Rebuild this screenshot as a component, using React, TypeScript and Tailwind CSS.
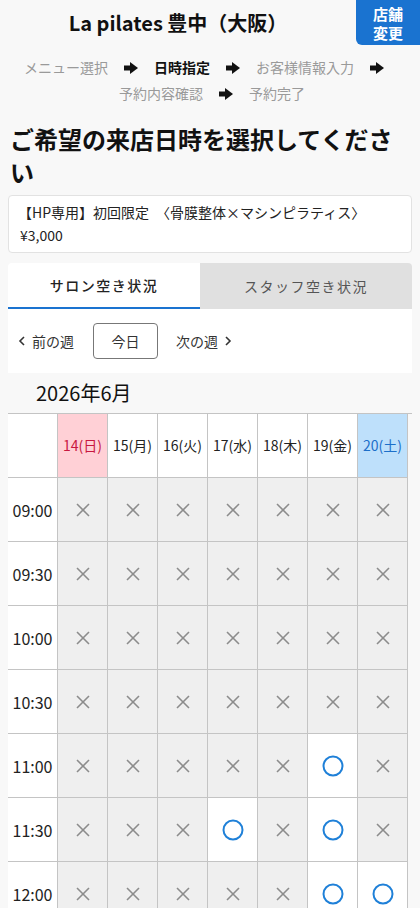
import React from "react";

const FONT = '"Noto Sans CJK JP", "Noto Sans", sans-serif';

function Arrow() {
  return (
    <svg width="14" height="12" viewBox="0 0 14 12" className="inline-block mx-[16px] align-[-1px]">
      <rect x="0" y="3.5" width="7" height="5" fill="#111" />
      <polygon points="6,0 14,6 6,12" fill="#111" />
    </svg>
  );
}

function Cross() {
  return (
    <svg width="14" height="14" viewBox="0 0 14 14">
      <line x1="1" y1="1" x2="13" y2="13" stroke="#8c8c8c" strokeWidth="1.6" />
      <line x1="13" y1="1" x2="1" y2="13" stroke="#8c8c8c" strokeWidth="1.6" />
    </svg>
  );
}

function Circle() {
  return (
    <svg width="22" height="22" viewBox="0 0 22 22">
      <circle cx="11" cy="11" r="9.5" fill="none" stroke="#1f80d8" strokeWidth="2" />
    </svg>
  );
}

const days = [
  { label: "14(日)", kind: "sun" },
  { label: "15(月)", kind: "" },
  { label: "16(火)", kind: "" },
  { label: "17(水)", kind: "" },
  { label: "18(木)", kind: "" },
  { label: "19(金)", kind: "" },
  { label: "20(土)", kind: "sat" },
];

const rows: { time: string; open: number[] }[] = [
  { time: "09:00", open: [] },
  { time: "09:30", open: [] },
  { time: "10:00", open: [] },
  { time: "10:30", open: [] },
  { time: "11:00", open: [5] },
  { time: "11:30", open: [3, 5] },
  { time: "12:00", open: [5, 6] },
  { time: "12:30", open: [5, 6] },
];

export default function App() {
  return (
    <div className="min-h-screen bg-[#f8f8f8] text-[#222]" style={{ fontFamily: FONT }}>
      {/* header */}
      <div className="flex h-[45px] items-center">
        <div className="flex-1 text-center text-[20px] font-bold text-[#111]">La pilates 豊中（大阪）</div>
        <div className="w-[64px] h-[45px] bg-[#1a73d0] text-white rounded-bl-[6px] flex flex-col items-center justify-center text-[15px] font-bold leading-[19px]">
          <span>店舗</span>
          <span>変更</span>
        </div>
      </div>

      {/* breadcrumb */}
      <div className="mt-[9px] text-[14px] leading-[26px] text-[#9a9a9a] text-center">
        <div className="pl-[4px]">
          <span>メニュー選択</span>
          <Arrow />
          <span className="font-bold text-[#111]">日時指定</span>
          <Arrow />
          <span>お客様情報入力</span>
          <Arrow />
        </div>
        <div className="pl-[4px]">
          <span>予約内容確認</span>
          <Arrow />
          <span>予約完了</span>
        </div>
      </div>

      {/* heading */}
      <h1 className="mt-[16px] px-[10px] text-[24px] font-bold leading-[33px] text-[#111]">
        ご希望の来店日時を選択してください
      </h1>

      {/* menu card */}
      <div className="mx-2 mt-[7px] bg-white border border-[#e2e2e2] rounded-[4px] px-[9px] py-[5px] text-[14px] leading-[23px] text-[#222]">
        <div>【HP専用】初回限定　〈骨膜整体×マシンピラティス〉</div>
        <div className="pl-[2px]">¥3,000</div>
      </div>

      {/* tabs */}
      <div className="mx-2 mt-[10px] flex h-[46px] text-[14px] tracking-[1.5px]">
        <div className="w-[192px] bg-white rounded-tl-[4px] border-b-2 border-[#1a73d0] flex items-center justify-center font-medium text-[#222]">
          サロン空き状況
        </div>
        <div className="flex-1 bg-[#e0e0e0] rounded-tr-[4px] flex items-center justify-center text-[#555]">
          スタッフ空き状況
        </div>
      </div>

      {/* week nav */}
      <div className="mx-2 bg-white h-[64px] flex items-center text-[14px] text-[#333]">
        <div className="flex items-center pl-[10px] gap-[6px]">
          <svg width="8" height="10" viewBox="0 0 8 10">
            <polyline points="6,1 2,5 6,9" fill="none" stroke="#333" strokeWidth="1.6" />
          </svg>
          <span>前の週</span>
        </div>
        <div className="ml-[19px] w-[65px] h-[36px] border border-[#777] rounded-[4px] flex items-center justify-center">
          今日
        </div>
        <div className="ml-[18px] flex items-center gap-[6px]">
          <span>次の週</span>
          <svg width="8" height="10" viewBox="0 0 8 10">
            <polyline points="2,1 6,5 2,9" fill="none" stroke="#333" strokeWidth="1.6" />
          </svg>
        </div>
      </div>

      {/* month */}
      <div className="h-[40px] flex items-center pl-[36px] text-[20px] text-[#111]">2026年6月</div>

      {/* table */}
      <div className="mx-2 border-t border-[#c4c4c4] grid grid-cols-[50px_repeat(7,50px)]">
        <div className="h-[64px] bg-white border-r border-b border-[#c4c4c4]" />
        {days.map((d) => (
          <div
            key={d.label}
            className={
              "h-[64px] border-r border-b border-[#c4c4c4] flex items-center justify-center text-[14px] " +
              (d.kind === "sun"
                ? "bg-[#ffd0d6] text-[#c8173f]"
                : d.kind === "sat"
                ? "bg-[#bee0fb] text-[#1c6fc9]"
                : "bg-white text-[#222]")
            }
          >
            {d.label}
          </div>
        ))}
        {rows.map((r) => (
          <React.Fragment key={r.time}>
            <div className="h-[64px] bg-white border-r border-b border-[#c4c4c4] flex items-center justify-center text-[16px] text-[#222]">
              {r.time}
            </div>
            {days.map((d, i) => {
              const open = r.open.includes(i);
              return (
                <div
                  key={d.label}
                  className={
                    "h-[64px] border-r border-b border-[#c4c4c4] flex items-center justify-center " +
                    (open ? "bg-white" : "bg-[#efefef]")
                  }
                >
                  {open ? <Circle /> : <Cross />}
                </div>
              );
            })}
          </React.Fragment>
        ))}
      </div>
    </div>
  );
}
